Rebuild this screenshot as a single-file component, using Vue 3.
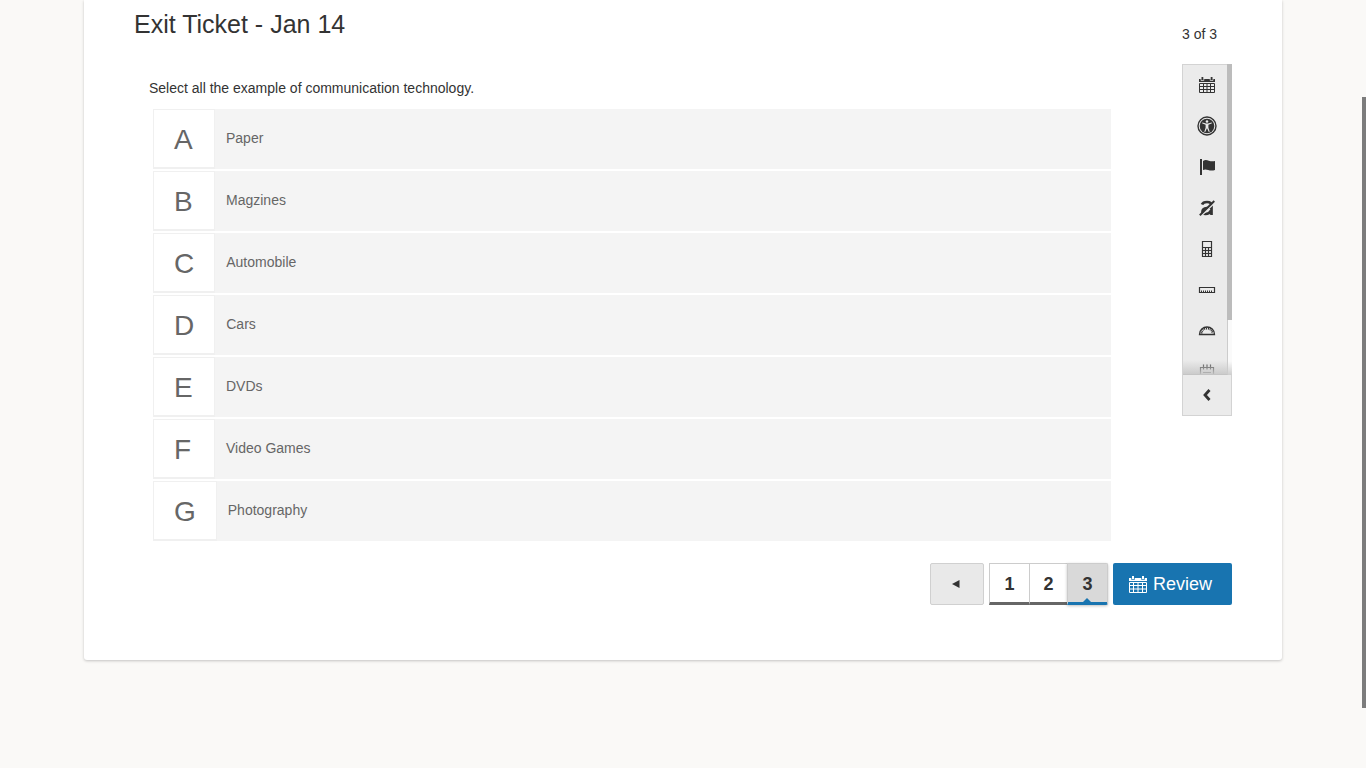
<script setup>
import { ref } from 'vue'

const options = [
  { letter: 'A', text: 'Paper' },
  { letter: 'B', text: 'Magzines' },
  { letter: 'C', text: 'Automobile' },
  { letter: 'D', text: 'Cars' },
  { letter: 'E', text: 'DVDs' },
  { letter: 'F', text: 'Video Games' },
  { letter: 'G', text: 'Photography' }
]
const picked = ref([])
const pages = [1, 2, 3]
const current = ref(3)
</script>

<template>
  <div class="page">
    <main class="card">
      <header class="head">
        <h1>Exit Ticket - Jan 14</h1>
        <p class="count">{{ current }} of 3</p>
      </header>

      <div class="body">
        <fieldset class="question">
          <legend>Select all the example of communication technology.</legend>
          <div class="options">
            <label v-for="o in options" :key="o.letter" class="option">
              <input v-model="picked" type="checkbox" :value="o.letter" class="tick" />
              <span class="letter">{{ o.letter }}</span>
              <span class="answer">{{ o.text }}</span>
            </label>
          </div>
        </fieldset>

        <aside class="tools" aria-label="Tools">
          <div class="tool-list">
            <button type="button" aria-label="Review">
              <svg viewBox="0 0 20 20"><path d="M2 4h2.500V2h1.800v2h7.400V2h1.800v2H18v3H2z" fill="#333" /><path d="M4 4v1.500h2.800V4M13.200 4v1.500H16V4" fill="none" stroke="#ebebeb" stroke-width=".7" /><path d="M2.500 8.500h15v9h-15zM2 11.500h16M2 14.500h16M6.500 8v10M10 8v10M13.500 8v10" fill="none" stroke="#333" /></svg>
            </button>
            <button type="button" aria-label="Accessibility">
              <svg viewBox="0 0 20 20"><circle cx="10" cy="10" r="9" fill="#ebebeb" stroke="#333" stroke-width="1.400" /><circle cx="10" cy="10" r="7.300" fill="#333" /><circle cx="10" cy="5.500" r="1.300" fill="#ebebeb" /><path d="M5.400 6.500l3.600 1.100h2l3.600-1.100.4.800-3.600 1.500v3l1.300 4-.9.300-1.600-3.600h-.4l-1.600 3.600-.9-.3 1.300-4v-3L5 7.300z" fill="#ebebeb" /></svg>
            </button>
            <button type="button" aria-label="Flag question">
              <svg viewBox="0 0 20 20"><path d="M3 2h2v16H3zM6 4c4-3 6 1.500 12 0v9c-6 2-8-2-12 0z" fill="#333" /></svg>
            </button>
            <button type="button" aria-label="Answer eliminator">
              <svg viewBox="0 0 20 20"><path d="M5 6.500Q6 4 10 4q4.800 0 4.500 4v9M14 9.500l-4 .5q-4.500.5-4.500 3.500 0 2.500 3 2.500 4 0 5.500-3.500" fill="none" stroke="#333" stroke-width="2.700" /><path d="M3.500 18.300L18 4.500" stroke="#ebebeb" stroke-width="1.600" /><path d="M2.800 17.300L17.300 3" stroke="#333" stroke-width="1.900" /></svg>
            </button>
            <button type="button" aria-label="Calculator">
              <svg viewBox="0 0 20 20"><path d="M5.500 2.500h9v15h-9zM5.500 8.500h9M5.500 11.500h9M5.500 14.500h9M8.500 8.500v9M11.500 8.500v9" fill="none" stroke="#333" stroke-width="1.200" /></svg>
            </button>
            <button type="button" aria-label="Ruler">
              <svg viewBox="0 0 20 20"><path d="M2.500 7.500h15v5h-15z" fill="none" stroke="#333" stroke-width="1.200" /><path d="M4.500 12v-1.500M6.500 12v-1.500M8.500 12v-1.500M10.500 12v-1.500M12.500 12v-1.500M14.500 12v-1.500" stroke="#333" /></svg>
            </button>
            <button type="button" aria-label="Protractor">
              <svg viewBox="0 0 20 20"><path d="M2.500 13.500C2.500 9 6 6 10 6s7.500 3 7.500 7.500z" fill="none" stroke="#333" stroke-width="1.300" /><path d="M4.500 12.500q.5-5 5.500-5t5.500 5" fill="none" stroke="#333" stroke-width="2" stroke-dasharray="1 .8" /></svg>
            </button>
            <button type="button" aria-label="Notepad">
              <svg viewBox="0 0 20 20"><path d="M3.500 18V5.500h13V18M6.500 2.500v5M10 2.500v5M13.500 2.500v5M6 10.500h8" fill="none" stroke="#444" stroke-width="1.200" /></svg>
            </button>
          </div>
          <button type="button" class="collapse" aria-label="Collapse tools">
            <svg viewBox="0 0 20 20"><path d="M12.500 5L8 10l4.500 5" fill="none" stroke="#333" stroke-width="2.800" /></svg>
          </button>
          <span class="tool-thumb"></span>
        </aside>
      </div>

      <nav class="pager" aria-label="Questions">
        <button type="button" class="prev" aria-label="Previous">
          <svg viewBox="0 0 8 8"><path d="M7.500 0v8L0 4z" fill="#333" /></svg>
        </button>
        <div class="pages">
          <button v-for="p in pages" :key="p" type="button" :class="{ active: p === current }" @click="current = p">{{ p }}</button>
        </div>
        <button type="button" class="review">
          <svg viewBox="0 0 20 20"><path d="M1 4h3V2h2v2h8V2h2v2h3v3H1z" fill="#fff" /><path d="M3.500 4v1.500h3V4M13.500 4v1.500h3V4" fill="none" stroke="#1874b0" stroke-width=".7" /><path d="M1.500 8.500h17v10h-17zM1 11.500h18M1 15h18M5.500 8v10M10 8v10M14.500 8v10" fill="none" stroke="#fff" /></svg>
          Review
        </button>
      </nav>
    </main>
    <div class="page-thumb"></div>
  </div>
</template>

<style>
body {
  background: #faf9f7;
}
</style>

<style scoped>
* {
  box-sizing: border-box;
}
.page {
  min-height: 100vh;
  display: flow-root;
  background: #faf9f7;
}
.card {
  margin: 0 84px;
  padding: 0 50px 55px;
  background: #fff;
  border-radius: 0 0 3px 3px;
  box-shadow: 0 1px 3px rgba(0, 0, 0, 0.22);
  font-family: "Liberation Sans", Arial, sans-serif;
  font-size: 14px;
  color: #333;
}
button {
  font-family: inherit;
  color: inherit;
  border: 0;
  padding: 0;
  background: none;
  cursor: pointer;
}
.head {
  display: flex;
  justify-content: space-between;
  height: 64px;
}
h1 {
  margin: 9px 0 0;
  font-size: 25px;
  line-height: 30px;
  font-weight: 400;
}
.count {
  margin: 26px 15px 0 0;
  line-height: 16px;
}
.body {
  display: flex;
  align-items: flex-start;
  justify-content: space-between;
}
.question {
  flex: 1;
  min-width: 0;
  margin: 0 71px 0 0;
  padding: 0;
  border: 0;
}
legend {
  padding: 16px 15px 13px;
  line-height: 16px;
}
.options {
  display: flex;
  flex-direction: column;
  gap: 2px;
  margin-left: 19px;
}
.option {
  display: flex;
  height: 60px;
  background: #f4f4f4;
  color: #666;
  cursor: pointer;
}
.tick {
  position: absolute;
  opacity: 0;
}
.letter {
  min-width: 62px;
  padding: 0 20px;
  background: #fff;
  border: 1px solid #f0f0f0;
  border-bottom-width: 2px;
  font-size: 28px;
  line-height: 60px;
}
.answer {
  padding-left: 11px;
  line-height: 59px;
}
.tools {
  position: relative;
  width: 50px;
  border: 1px solid #d3d3d3;
  background: #ebebeb;
}
.tool-list {
  height: 310px;
  overflow: hidden;
  position: relative;
  width: 45px;
  border-right: 1px solid #ccc;
  border-bottom: 1px solid #c4c4c4;
}
.tool-list::after {
  content: "";
  position: absolute;
  inset: auto 0 0;
  height: 14px;
  background: linear-gradient(rgba(200, 200, 200, 0), rgba(200, 200, 200, 0.9));
}
.tool-list button {
  display: flex;
  align-items: center;
  justify-content: center;
  width: 48px;
  height: 41px;
  padding-bottom: 1px;
}
.tool-list svg,
.collapse svg {
  width: 20px;
  height: 20px;
}
.collapse {
  display: flex;
  align-items: center;
  justify-content: center;
  width: 48px;
  height: 40px;
}
.tool-thumb {
  position: absolute;
  top: -1px;
  right: -1px;
  width: 5px;
  height: 256px;
  background: #bcbcbc;
}
.tools::after {
  content: "";
  position: absolute;
  top: 255px;
  right: -1px;
  width: 4px;
  height: 55px;
  background: linear-gradient(#fafafa 75%, #cecece);
}
.pager {
  display: flex;
  justify-content: flex-end;
  gap: 5px;
  margin-top: 22px;
  height: 42px;
}
.prev {
  width: 54px;
  padding-right: 2px;
  background: #e9e9e9;
  border: 1px solid #d0d0d0;
  border-radius: 2px;
}
.prev svg {
  width: 8px;
  height: 8px;
  display: block;
  margin: 0 auto;
}
.pages {
  display: flex;
  width: 119px;
}
.pages button {
  position: relative;
  flex: 1;
  padding-top: 2px;
  border: 1px solid #ccc;
  border-right: 0;
  border-bottom: 3px solid #666;
  font-size: 18px;
  font-weight: 700;
  line-height: 36px;
}
.pages button + button {
  flex: 0 0 38px;
}
.pages button:last-child {
  flex: 0 0 41px;
  border-right: 1px solid #ccc;
  border-radius: 0 2px 2px 0;
}
.pages .active {
  background: #d9d9d9;
  border-bottom-color: #1874b0;
  box-shadow: 0 1px 3px rgba(0, 0, 0, 0.25);
}
.pages .active::after {
  content: "";
  position: absolute;
  left: 50%;
  bottom: 0;
  margin-left: -4px;
  border: 4px solid transparent;
  border-top: 0;
  border-bottom-color: #1874b0;
}
.review {
  display: flex;
  align-items: center;
  gap: 5px;
  padding: 0 20px 0 15px;
  background: #1874b0;
  border-radius: 2px;
  color: #fff;
  font-size: 18px;
}
.review svg {
  width: 20px;
  height: 20px;
}
.page-thumb {
  position: fixed;
  top: 97px;
  right: 0;
  width: 4px;
  height: 611px;
  background: #7c7c7c;
}
</style>
